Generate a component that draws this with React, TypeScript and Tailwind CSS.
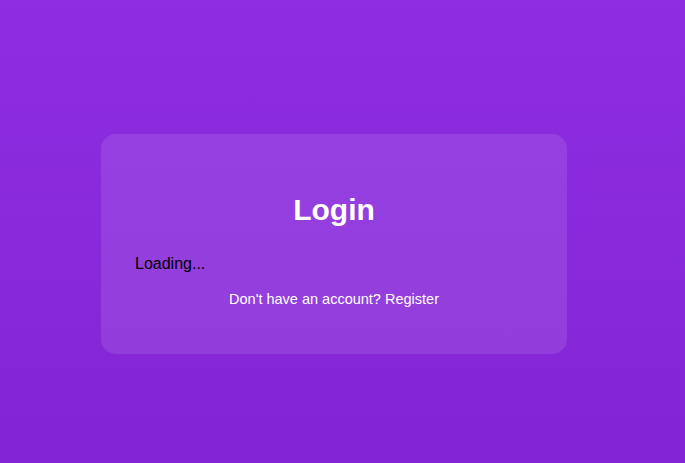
export default function App() {
  return (
    <div className="min-h-screen w-full bg-gradient-to-b from-[#8e2de2] to-[#8325d4] font-['Liberation_Sans',Arial,sans-serif]">
      <div className="flex justify-center pr-[17px] pt-[134px]">
        {/* login card */}
        <div className="w-[466px] rounded-[15px] bg-white/10 px-[34px] pt-[59px] pb-[47px]">
          <h2 className="text-center text-[30px] font-bold leading-[34px] text-white">Login</h2>
          <p className="mt-[28px] text-[16px] leading-[18px] text-black">Loading...</p>
          <p className="mt-[18px] text-center text-[14.5px] leading-[16px] text-white">
            Don't have an account? <span>Register</span>
          </p>
        </div>
      </div>
    </div>
  );
}
